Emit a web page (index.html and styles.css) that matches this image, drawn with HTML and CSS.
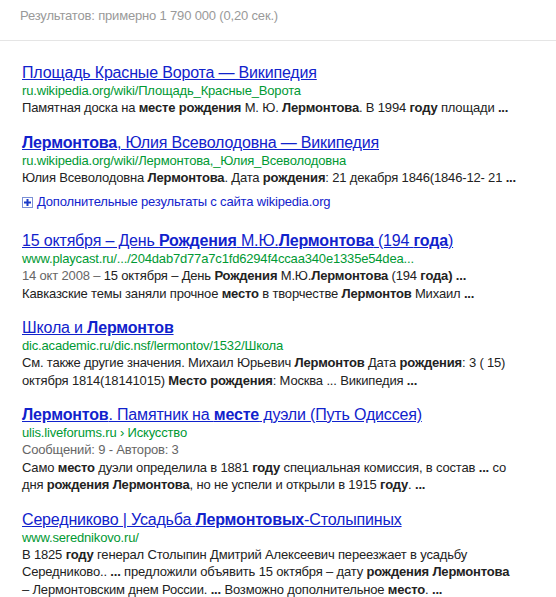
FILE: index.html
```html
<!DOCTYPE html>
<html lang="ru">
  <head>
    <meta charset="UTF-8" />
    <title>Лермонтов место рождения год</title>
    <link rel="stylesheet" href="styles.css">
  </head>
  <body>
    <div class="stats">Результатов: примерно 1&nbsp;790&nbsp;000 (0,20 сек.)</div>

    <ol class="results">
      <li class="result">
        <h3><a href="#">Площадь Красные Ворота — Википедия</a></h3>
        <cite>ru.wikipedia.org/wiki/Площадь_Красные_Ворота</cite>
        <p>Памятная доска на <b>месте рождения</b> М. Ю. <b>Лермонтова</b>. В 1994 <b>году</b> площади <b>...</b></p>
      </li>
      <li class="result">
        <h3><a href="#"><b>Лермонтова</b>, Юлия Всеволодовна — Википедия</a></h3>
        <cite>ru.wikipedia.org/wiki/Лермонтова,_Юлия_Всеволодовна</cite>
        <p>Юлия Всеволодовна <b>Лермонтова</b>. Дата <b>рождения</b>: 21 декабря 1846(1846-12- 21 <b>...</b></p>
        <a class="more" href="#">
          <svg width="11" height="11" viewBox="0 0 11 11">
            <rect x="0.5" y="0.5" width="10" height="10" fill="#fff" stroke="#7a8fd6" />
            <rect x="2" y="4.5" width="7" height="2" fill="#1a3bc8" />
            <rect x="4.5" y="2" width="2" height="7" fill="#1a3bc8" />
          </svg>
          Дополнительные результаты с сайта wikipedia.org
        </a>
      </li>
      <li class="result">
        <h3><a href="#">15 октября – День <b>Рождения</b> М.Ю.<b>Лермонтова</b> (194 <b>года</b>)</a></h3>
        <cite>www.playcast.ru/.../204dab7d77a7c1fd6294f4ccaa340e1335e54dea...</cite>
        <p><span class="date">14 окт 2008 – </span>15 октября – День <b>Рождения</b> М.Ю.<b>Лермонтова</b> (194 <b>года)</b> <b>...</b><br>Кавказские темы заняли прочное <b>место</b> в творчестве <b>Лермонтов</b> Михаил <b>...</b></p>
      </li>
      <li class="result">
        <h3><a href="#">Школа и <b>Лермонтов</b></a></h3>
        <cite>dic.academic.ru/dic.nsf/lermontov/1532/Школа</cite>
        <p>См. также другие значения. Михаил Юрьевич <b>Лермонтов</b> Дата <b>рождения</b>: 3 ( 15)<br>октября 1814(18141015) <b>Место рождения</b>: Москва ... Википедия <b>...</b></p>
      </li>
      <li class="result">
        <h3><a href="#"><b>Лермонтов</b>. Памятник на <b>месте</b> дуэли (Путь Одиссея)</a></h3>
        <cite>ulis.liveforums.ru › Искусство</cite>
        <div class="meta">Сообщений: 9 - Авторов: 3</div>
        <p>Само <b>место</b> дуэли определила в 1881 <b>году</b> специальная комиссия, в состав <b>...</b> со<br>дня <b>рождения Лермонтова</b>, но не успели и открыли в 1915 <b>году</b>. <b>...</b></p>
      </li>
      <li class="result">
        <h3><a href="#">Середниково | Усадьба <b>Лермонтовых</b>-Столыпиных</a></h3>
        <cite>www.serednikovo.ru/</cite>
        <p>В 1825 <b>году</b> генерал Столыпин Дмитрий Алексеевич переезжает в усадьбу<br>Середниково.. <b>...</b> предложили объявить 15 октября – дату <b>рождения Лермонтова</b><br>– Лермонтовским днем России. <b>...</b> Возможно дополнительное <b>место</b>. <b>...</b></p>
      </li>
    </ol>
  </body>
</html>
```

FILE: styles.css
```css
body {
  margin: 0;
  background: #fff;
  font-family: "Liberation Sans", Arial, sans-serif;
  font-size: 13px;
  letter-spacing: -0.17px;
  color: #222;
}
.stats {
  color: #999;
  padding: 7px 20px 0;
  height: 33px;
  line-height: 17px;
  border-bottom: 1px solid #e5e5e5;
}
.results {
  list-style: none;
  margin: 0;
  padding: 22px 0 0 22px;
}
.result {
  margin-bottom: 16px;
}
.result h3 {
  margin: 0;
  font-size: 16px;
  font-weight: normal;
  line-height: 19px;
}
.result h3 a {
  color: #12c;
  text-decoration: underline;
}
.result cite {
  display: block;
  font-style: normal;
  color: #093;
  line-height: 17px;
}
.result p,
.result .meta {
  margin: 0;
  line-height: 17.5px;
}
.result .meta,
.result .date {
  color: #666;
}
.more {
  display: flex;
  align-items: center;
  gap: 4px;
  margin-top: 8px;
  margin-bottom: 21px;
  color: #12c;
  text-decoration: none;
  line-height: 16px;
}
```
